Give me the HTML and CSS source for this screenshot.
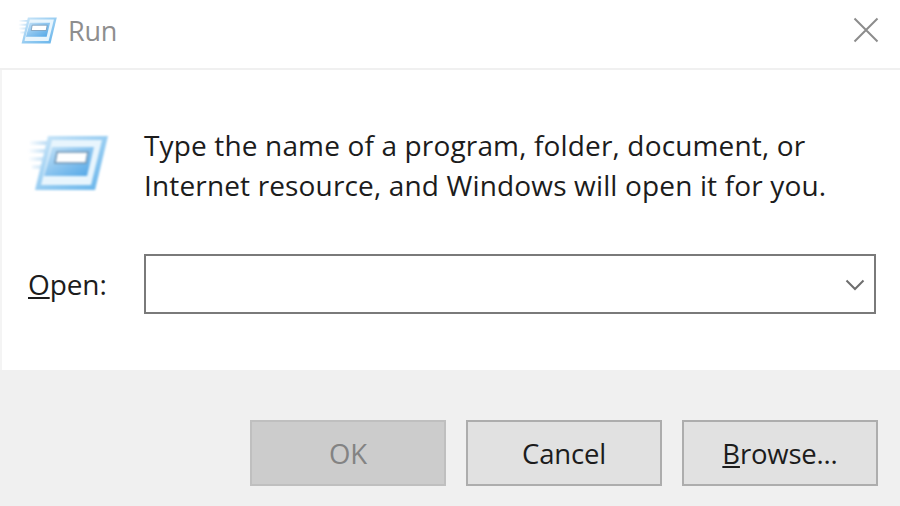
FILE: index.html
```html
<!DOCTYPE html>
<html lang="en">
<head>
    <meta charset="UTF-8">
    <meta name="viewport" content="width=device-width, initial-scale=1.0">
    <title>Run</title>
    <link rel="stylesheet" href="styles.css">
</head>
<body>
    <div class="dialog">
        <!-- Title bar -->
        <div class="titlebar">
            <svg class="title-icon" viewBox="0 0 80 56" aria-hidden="true">
                <use href="#runIcon"></use>
            </svg>
            <span class="title-text">Run</span>
            <svg class="close-icon" viewBox="0 0 26 26" aria-hidden="true">
                <path d="M1.5 1.5 L24.5 24.5 M24.5 1.5 L1.5 24.5"></path>
            </svg>
        </div>

        <!-- Message and input -->
        <div class="content">
            <div class="message-row">
                <svg class="run-icon" viewBox="0 0 80 56" aria-hidden="true">
                    <defs>
                        <linearGradient id="runFace" x1="0" y1="0" x2="1" y2="1">
                            <stop offset="0" stop-color="#cfe8f9"></stop>
                            <stop offset="1" stop-color="#62b2ea"></stop>
                        </linearGradient>
                        <linearGradient id="runField" x1="0" y1="0" x2="1" y2="1">
                            <stop offset="0" stop-color="#c4e2f7"></stop>
                            <stop offset="1" stop-color="#4fa5e6"></stop>
                        </linearGradient>
                        <linearGradient id="runTrail" x1="0" y1="0" x2="1" y2="0">
                            <stop offset="0" stop-color="#ffffff"></stop>
                            <stop offset="1" stop-color="#bcdcf4"></stop>
                        </linearGradient>
                        <g id="runIcon">
                            <path d="M2 6 H20 V10 H2 Z M0 14 H18 V18 H0 Z M1 22 H16 V26 H1 Z M4 30 H14 V34 H4 Z" fill="url(#runTrail)"></path>
                            <path d="M20 1 H80 L67 55 H7 Z" fill="url(#runFace)"></path>
                            <path d="M24 5 H74 L63 50 H13 Z" fill="#e8f5fd"></path>
                            <path d="M24 12 H66 L59 41 H16 Z" fill="url(#runField)"></path>
                            <path d="M29 17 H60 L58 28 H27 Z" fill="#fff" stroke="#6f93b3" stroke-width="1.5"></path>
                        </g>
                    </defs>
                    <use href="#runIcon"></use>
                </svg>
                <p class="message">Type the name of a program, folder, document, or<br>Internet resource, and Windows will open it for you.</p>
            </div>
            <div class="open-row">
                <label class="open-label" for="openInput"><u>O</u>pen:</label>
                <div class="combo">
                    <input type="text" id="openInput" class="combo-input">
                    <svg class="combo-arrow" viewBox="0 0 20 12" aria-hidden="true">
                        <path d="M1.5 1.5 L10 10 L18.5 1.5"></path>
                    </svg>
                </div>
            </div>
        </div>

        <!-- Buttons -->
        <div class="footer">
            <button class="btn btn-disabled" disabled>OK</button>
            <button class="btn">Cancel</button>
            <button class="btn"><u>B</u>rowse...</button>
        </div>
    </div>
</body>
</html>
```

FILE: styles.css
```css
html, body {
    margin: 0;
    padding: 0;
}
body {
    width: 900px;
    height: 506px;
    overflow: hidden;
    background: #fff;
    font-family: "Open Sans", "Noto Sans", Arial, sans-serif;
    color: #1c1c1c;
}
.dialog {
    display: flex;
    flex-direction: column;
    height: 506px;
}
.titlebar {
    display: flex;
    align-items: center;
    height: 70px;
    padding: 0 21px 8px 18px;
    box-sizing: border-box;
    border-bottom: 2px solid #f0f0f0;
}
.title-icon {
    width: 39px;
    height: 27px;
    margin-right: 11px;
    filter: blur(0.7px);
}
.title-text {
    flex: 1;
    font-size: 27px;
    letter-spacing: -0.2px;
    color: #8e8e8e;
}
.close-icon {
    width: 26px;
    height: 26px;
    fill: none;
    stroke: #8c8c8c;
    stroke-width: 2;
}
.content {
    flex: 1;
    border-left: 2px solid #f4f4f4;
    padding-left: 26px;
    padding-right: 24px;
}
.message-row {
    display: flex;
    align-items: flex-start;
    padding-top: 55px;
}
.run-icon {
    width: 80px;
    height: 56px;
    margin-top: 10px;
    margin-right: 36px;
    filter: blur(0.9px);
}
.message {
    margin: 0;
    font-size: 28px;
    line-height: 40px;
    letter-spacing: 0.15px;
}
.open-row {
    display: flex;
    align-items: center;
    margin-top: 49px;
}
.open-label {
    width: 116px;
    font-size: 28px;
    letter-spacing: -0.1px;
}
.combo {
    position: relative;
    width: 732px;
    height: 60px;
}
.combo-input {
    width: 100%;
    height: 100%;
    box-sizing: border-box;
    border: 2px solid #7a7a7a;
    border-radius: 0;
    background: #fff;
    outline: none;
}
.combo-arrow {
    position: absolute;
    right: 11px;
    top: 25px;
    width: 20px;
    height: 12px;
    fill: none;
    stroke: #6e6e6e;
    stroke-width: 2;
}
.footer {
    display: flex;
    justify-content: flex-end;
    gap: 20px;
    height: 136px;
    box-sizing: border-box;
    padding: 50px 22px 20px 0;
    background: #f0f0f0;
}
.btn {
    width: 196px;
    height: 66px;
    padding: 0;
    border: 2px solid #adadad;
    border-radius: 0;
    background: #e1e1e1;
    font-family: inherit;
    font-size: 27.5px;
    letter-spacing: -0.2px;
    color: #1c1c1c;
}
.btn-disabled {
    border-color: #bfbfbf;
    background: #cccccc;
    color: #838383;
}
```
